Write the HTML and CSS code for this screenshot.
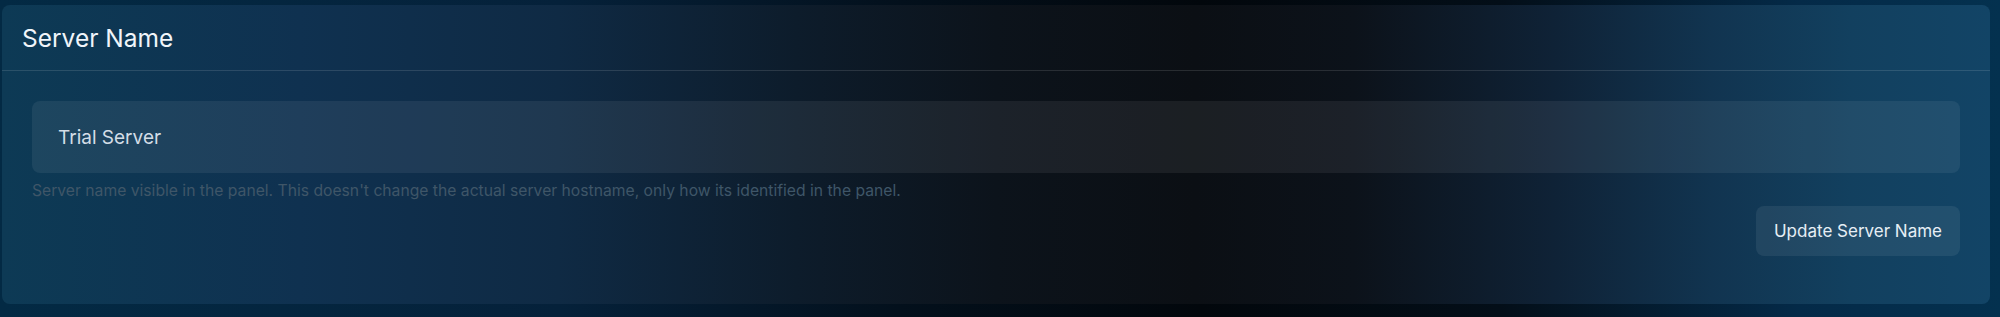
FILE: index.html
```html
<!DOCTYPE html>
<html lang="en">
<head>
<meta charset="utf-8">
<title>Server Name</title>
<link rel="stylesheet" href="styles.css">
</head>
<body>
<div class="page">
  <section class="card">
    <header class="card-header">
      <h2 class="card-title">Server Name</h2>
    </header>
    <div class="card-body">
      <div class="field">
        <input class="text-input" type="text" value="Trial Server">
      </div>
      <p class="hint">Server name visible in the panel. This doesn't change the actual server hostname, only how its identified in the panel.</p>
      <div class="actions">
        <button class="btn" type="button">Update Server Name</button>
      </div>
    </div>
  </section>
</div>
</body>
</html>
```
FILE: styles.css
```css
* { box-sizing: border-box; }
html, body { margin: 0; padding: 0; }
body {
  width: 2000px;
  height: 317px;
  overflow: hidden;
  font-family: Inter, "Noto Sans", sans-serif;
  background: linear-gradient(90deg, #032a44 0%, #05213a 28%, #03101c 45%, #02070c 60%, #030e18 75%, #042a48 90%, #04314f 100%);
}
.page {
  padding: 5px 10px 13px 2px;
}
.card {
  height: 299px;
  border-radius: 8px;
  background: linear-gradient(90deg, #0d3a55 0%, #0f3150 15%, #0f2a44 28%, #0d1c2b 40%, #0c131b 50%, #0b0f14 60%, #0c121a 68%, #0f2236 78%, #113450 86%, #12405f 93%, #124466 100%);
  display: flex;
  flex-direction: column;
}
.card-header {
  height: 66px;
  padding: 0 20px;
  display: flex;
  align-items: center;
  border-bottom: 1px solid rgba(255, 255, 255, 0.12);
}
.card-title {
  margin: 0;
  font-size: 24.5px;
  font-weight: 400;
  color: #f0f5fa;
  letter-spacing: 0;
}
.card-body {
  padding: 30px 30px 0 30px;
  display: flex;
  flex-direction: column;
}
.text-input {
  width: 100%;
  height: 72px;
  border: none;
  outline: none;
  border-radius: 8px;
  background: rgba(255, 255, 255, 0.065);
  padding: 0 26px;
  font-family: Inter, "Noto Sans", sans-serif;
  font-size: 19px;
  color: #d3dde6;
}
.hint {
  margin: 8px 0 0 0;
  font-size: 15.7px;
  line-height: 20px;
  color: #3f5668;
}
.actions {
  display: flex;
  justify-content: flex-end;
  margin-top: 5px;
}
.btn {
  height: 50px;
  width: 204px;
  border: none;
  border-radius: 8px;
  background: rgba(255, 255, 255, 0.07);
  font-family: Inter, "Noto Sans", sans-serif;
  font-size: 17px;
  color: #e6eef5;
  padding: 0;
}
```
